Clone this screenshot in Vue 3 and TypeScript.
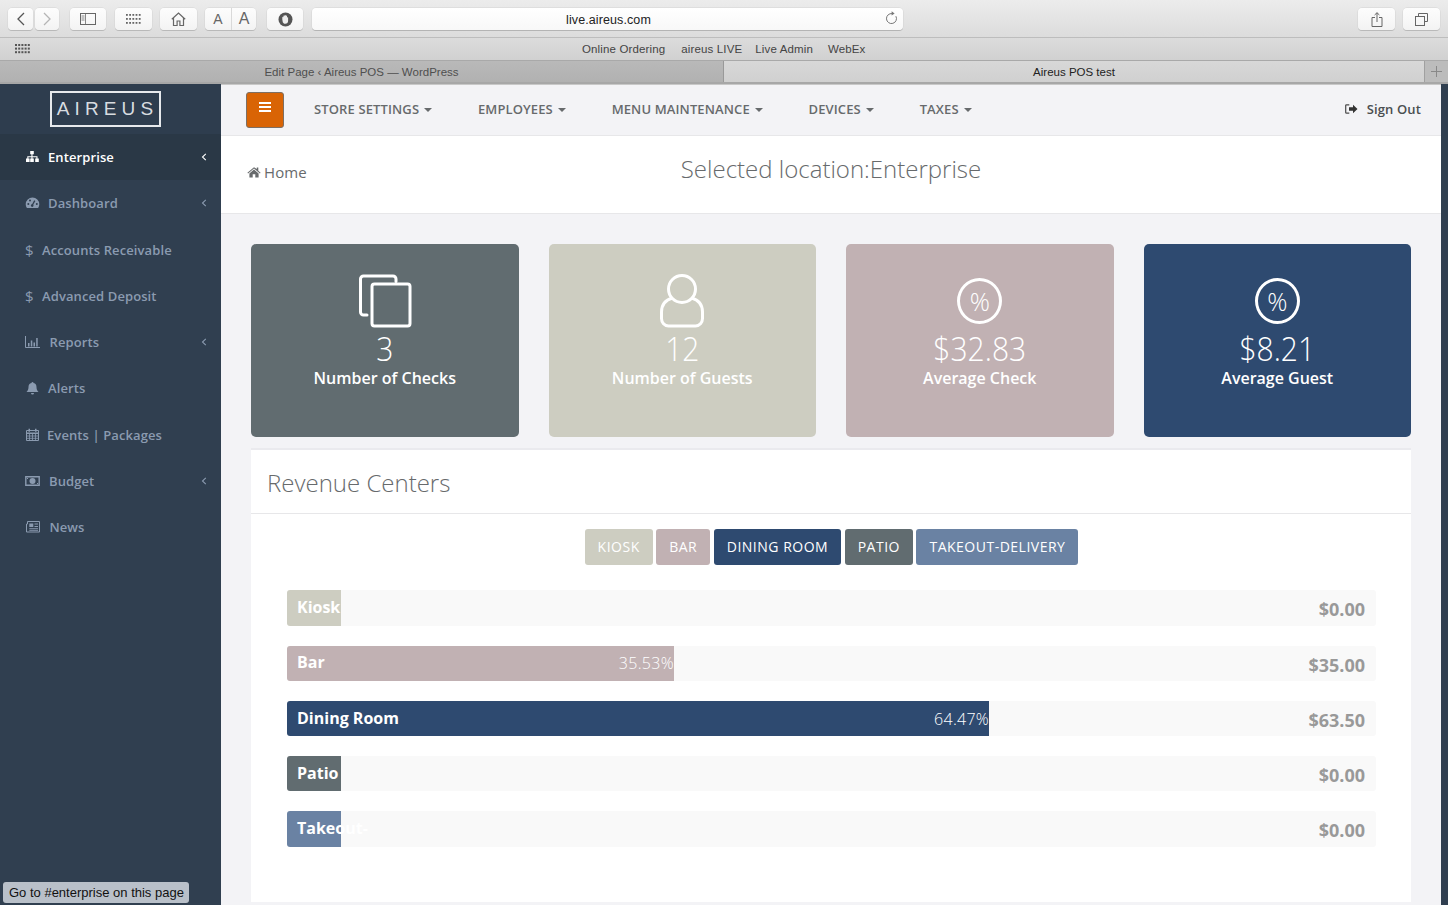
<script setup lang="ts">
interface MenuItem { label: string; icon: string; arrow?: boolean; active?: boolean; gap: number }
const menu: MenuItem[] = [
  { label: 'Enterprise', icon: 'sitemap', arrow: true, active: true, gap: 8 },
  { label: 'Dashboard', icon: 'gauge', arrow: true, gap: 8 },
  { label: 'Accounts Receivable', icon: 'dollar', gap: 9 },
  { label: 'Advanced Deposit', icon: 'dollar', gap: 9 },
  { label: 'Reports', icon: 'chart', arrow: true, gap: 9.5 },
  { label: 'Alerts', icon: 'bell', gap: 8 },
  { label: 'Events | Packages', icon: 'calendar', gap: 7 },
  { label: 'Budget', icon: 'money', arrow: true, gap: 9 },
  { label: 'News', icon: 'news', gap: 9.5 }
]
const navItems = ['STORE SETTINGS', 'EMPLOYEES', 'MENU MAINTENANCE', 'DEVICES', 'TAXES']
const cards = [
  { value: '3', label: 'Number of Checks', icon: 'copy', color: '#616c70' },
  { value: '12', label: 'Number of Guests', icon: 'user', color: '#cdcdc1' },
  { value: '$32.83', label: 'Average Check', icon: 'percent', color: '#c1b1b3' },
  { value: '$8.21', label: 'Average Guest', icon: 'percent', color: '#2e4a70' }
]
const tabs = [
  { label: 'KIOSK', color: '#cdcdc1' },
  { label: 'BAR', color: '#c1b1b3' },
  { label: 'DINING ROOM', color: '#2e4a70' },
  { label: 'PATIO', color: '#616c70' },
  { label: 'TAKEOUT-DELIVERY', color: '#6a82a3' }
]
const bars = [
  { label: 'Kiosk', pct: 5, text: '', amount: '$0.00', color: '#cdcdc1' },
  { label: 'Bar', pct: 35.53, text: '35.53%', amount: '$35.00', color: '#c1b1b3' },
  { label: 'Dining Room', pct: 64.47, text: '64.47%', amount: '$63.50', color: '#2e4a70' },
  { label: 'Patio', pct: 5, text: '', amount: '$0.00', color: '#616c70' },
  { label: 'Takeout-', pct: 5, text: '', amount: '$0.00', color: '#6a82a3' }
]
</script>

<template>
  <div class="window">
    <header class="chrome">
      <div class="toolbar">
        <button class="tb w25" aria-label="Back">
          <svg width="10" height="14" viewBox="0 0 10 14"><path d="M8 1 2 7l6 6" fill="none" stroke="#555" stroke-width="1.3" /></svg>
        </button>
        <button class="tb w24 ml2" aria-label="Forward">
          <svg width="10" height="14" viewBox="0 0 10 14"><path d="m2 1 6 6-6 6" fill="none" stroke="#b5b5b5" stroke-width="1.3" /></svg>
        </button>
        <button class="tb w36 ml11" aria-label="Sidebar">
          <svg width="16" height="12" viewBox="0 0 16 12"><rect x=".5" y=".5" width="15" height="11" fill="none" stroke="#666" /><path d="M5.5 1v10M1.5 3h3M1.5 5h3M1.5 7h3" stroke="#888" fill="none" /></svg>
        </button>
        <button class="tb w37 ml9" aria-label="Top sites">
          <svg width="15" height="11" viewBox="0 0 15 11" fill="#666"><g v-for="r in 3" :key="r"><rect v-for="c in 5" :key="c" :x="(c - 1) * 3.2" :y="(r - 1) * 4" width="1.8" height="1.8" /></g></svg>
        </button>
        <button class="tb w37 ml8" aria-label="Home">
          <svg width="15" height="14" viewBox="0 0 15 14"><path d="M.8 7.2 7.5 1l6.7 6.2M2.5 6v7.5h3.6V9h2.8v4.5h3.6V6" fill="none" stroke="#666" stroke-width="1.2" /></svg>
        </button>
        <div class="tb w51 ml8 aa">
          <span class="a-small">A</span><span class="a-big">A</span>
        </div>
        <button class="tb w36 ml11" aria-label="Shield">
          <svg width="15" height="15" viewBox="0 0 15 15"><circle cx="7.5" cy="7.5" r="7" fill="#555" /><path d="M4.300 7.500V5.200a.6.600 0 0 1 1.100 0V4a.6.600 0 0 1 1.200 0v-.4a.6.600 0 0 1 1.200 0V4a.6.600 0 0 1 1.200 0v1.500a.6.600 0 0 1 1.100 0v3.300c0 1.700-1 3-2.900 3-1.300 0-2-.6-2.400-1.500z" fill="#eee" /></svg>
        </button>
        <div class="url ml9">
          <span>live.aireus.com</span>
          <svg class="reload" width="13" height="14" viewBox="0 0 13 14"><path d="M10.9 5.2A5 5 0 1 1 7.2 2.6" fill="none" stroke="#777" /><path d="M6.6.3 9.6 2.6 6.6 4.6z" fill="#777" /></svg>
        </div>
        <span class="spacer"></span>
        <button class="tb w37" aria-label="Share">
          <svg width="12" height="15" viewBox="0 0 12 15"><path d="M4 5.500H1v9h10v-9H8M6 10V.8M3.600 3 6 .7 8.400 3" fill="none" stroke="#666" /></svg>
        </button>
        <button class="tb w37 ml8" aria-label="Tabs">
          <svg width="13" height="13" viewBox="0 0 13 13"><path d="M3.500 3.500v-3h9v8h-3" fill="none" stroke="#666" /><rect x=".5" y="3.500" width="9" height="9" fill="none" stroke="#666" /></svg>
        </button>
      </div>
      <div class="bookmarks">
        <svg class="bm-grid" width="15" height="10" viewBox="0 0 15 10" fill="#555"><g v-for="r in 3" :key="r"><rect v-for="c in 5" :key="c" :x="(c - 1) * 3.2" :y="(r - 1) * 3.6" width="2" height="2" /></g></svg>
        <a>Online Ordering</a><a>aireus LIVE</a><a>Live Admin</a><a>WebEx</a>
      </div>
      <div class="tabstrip">
        <div class="tab inactive">Edit Page ‹ Aireus POS — WordPress</div>
        <div class="tab current">Aireus POS test</div>
        <div class="newtab">
          <svg width="11" height="11" viewBox="0 0 11 11"><path d="M5.500 0v11M0 5.500h11" stroke="#888" /></svg>
        </div>
      </div>
    </header>

    <div class="app">
      <aside class="sidebar">
        <div class="logo-wrap"><div class="logo">AIREUS</div></div>
        <nav>
          <a v-for="m in menu" :key="m.label" class="side-item" :class="{ active: m.active }">
            <span v-if="m.icon === 'dollar'" class="dollar">$</span>
            <svg v-else class="side-icon" :class="'i-' + m.icon" width="15" height="14" viewBox="0 0 15 14" fill="currentColor">
              <template v-if="m.icon === 'sitemap'">
                <path d="M5.200 1h3.600v3.200H7.500v2h5v2.400h1.300v3.400h-3.600V8.600h1.200V7.300H7.500v1.300h1.300v3.400H5.200V8.600h1.200V7.300H3.400v1.300h1.200v3.400H1V8.600h1.300V6.200h4.100v-2H5.200z" />
              </template>
              <template v-else-if="m.icon === 'gauge'">
                <path d="M7.500 1.500a6.800 6.800 0 0 0-6.800 6.800c0 1.500.4 2.700 1.200 3.700h11.200c.8-1 1.200-2.200 1.200-3.700a6.800 6.800 0 0 0-6.800-6.800z" />
                <path d="M7.200 9.200 9.800 4.600" stroke="#303f50" stroke-width="1.300" />
                <circle cx="3.300" cy="8" r="1" fill="#303f50" /><circle cx="5" cy="4.500" r="1" fill="#303f50" /><circle cx="11.800" cy="8" r="1" fill="#303f50" /><circle cx="7.200" cy="9.600" r="1.300" fill="#303f50" />
              </template>
              <template v-else-if="m.icon === 'chart'">
                <path d="M.5 1v11.500H15" fill="none" stroke="currentColor" />
                <path d="M3 8h1.500v3.500H3zM5.800 5.500h1.500v6H5.800zM8.500 7.500H10v4H8.500zM11.200 3h1.500v8.500h-1.500z" />
              </template>
              <template v-else-if="m.icon === 'bell'">
                <path d="M7.500 1a1 1 0 0 1 1 1c2.300.4 3 2.200 3 4.300 0 2.700 1.200 3.700 2 4.700H1.500c.8-1 2-2 2-4.700 0-2.100.7-3.900 3-4.300a1 1 0 0 1 1-1zM6 12h3a1.500 1.500 0 0 1-3 0z" />
              </template>
              <template v-else-if="m.icon === 'calendar'">
                <path d="M1.500 2.500h12v10h-12z" fill="none" stroke="currentColor" />
                <path d="M3.500 .8h1.500v3H3.500zM10 .8h1.500v3H10zM1.500 4.500h12v1.500h-12z" />
                <path d="M2 8h11M2 10.300h11M4.500 6v6M7.500 6v6M10.500 6v6" stroke="currentColor" stroke-width=".8" />
              </template>
              <template v-else-if="m.icon === 'money'">
                <path d="M.8 2.800h13.400v8.400H.8z" fill="none" stroke="currentColor" stroke-width="1.400" />
                <circle cx="7.500" cy="7" r="3" />
                <path d="M2 4.500h1M12 9.500h1" stroke="currentColor" />
              </template>
              <template v-else>
                <path d="M2.500 1.500h12v10.500h-13V4h1z" fill="none" stroke="currentColor" />
                <path d="M4.300 3.500h4v3.500h-4zM9.500 3.500h3.500v1H9.500zM9.500 6h3.500v1H9.500zM4.300 8.300h8.700v1H4.300zM4.300 10h8.700v.8H4.300z" />
              </template>
            </svg>
            <span class="side-label" :style="{ marginLeft: m.gap + 'px' }">{{ m.label }}</span>
            <svg v-if="m.arrow" class="chev" width="6" height="8" viewBox="0 0 6 8"><path d="M4.800.8 1.500 4l3.300 3.200" fill="none" stroke="currentColor" stroke-width="1.100" /></svg>
          </a>
        </nav>
      </aside>

      <main class="main">
        <div class="topnav">
          <button class="burger" aria-label="Menu"><span></span><span></span><span></span></button>
          <ul class="navlist">
            <li v-for="n in navItems" :key="n">{{ n }}<i class="caret"></i></li>
          </ul>
          <a class="signout">
            <svg width="13" height="10" viewBox="0 0 13 10"><path d="M4.300.8H1.500a.8.800 0 0 0-.8.800v6.800c0 .4.400.8.800.8h2.800" fill="none" stroke="#4a4a4a" stroke-width="1.200" /><path d="M4 3.300h4V.8L12.500 5 8 9.200V6.700H4z" fill="#333" /></svg>
            Sign Out
          </a>
        </div>
        <div class="heading">
          <div class="crumb">
            <svg width="14" height="12" viewBox="0 0 14 12" fill="#676a6c"><path d="M7 1.200 .4 6.700l.7.800L7 2.600l5.900 4.900.7-.8-2.300-1.900V1.500H9.800v1.600zM2.400 7.400 7 3.500l4.600 3.900V11.500H8.300V8.300H5.700v3.200H2.400z" /></svg>
            Home
          </div>
          <h1>Selected location:Enterprise</h1>
        </div>

        <div class="content">
          <section class="cards">
            <article v-for="c in cards" :key="c.label" class="card" :style="{ background: c.color }">
              <svg v-if="c.icon === 'copy'" class="card-icon" width="54" height="54" viewBox="0 0 54 54" fill="none" stroke="#fff" stroke-width="3">
                <path d="M38 7.500V5a3 3 0 0 0-3-3H5.500a3 3 0 0 0-3 3v33a3 3 0 0 0 3 3H9" stroke-linecap="round" />
                <rect x="14" y="10" width="38" height="42" rx="2.500" />
              </svg>
              <svg v-else-if="c.icon === 'user'" class="card-icon" width="54" height="54" viewBox="0 0 54 54" fill="none" stroke="#fff" stroke-width="3">
                <circle cx="27" cy="15" r="13.500" />
                <path d="M17.500 24C10.500 26 6.500 31 6.500 38v6.500c0 4 3 7.500 7 7.500h27c4 0 7-3.500 7-7.500V38c0-7-4-12-11-14" />
              </svg>
              <div v-else class="pct-circle"><span>%</span></div>
              <div class="value">{{ c.value }}</div>
              <div class="label">{{ c.label }}</div>
            </article>
          </section>

          <section class="panel">
            <h2>Revenue Centers</h2>
            <div class="panel-body">
              <div class="filters">
                <button v-for="t in tabs" :key="t.label" class="filter" :style="{ background: t.color }">{{ t.label }}</button>
              </div>
              <div class="bars">
                <div v-for="b in bars" :key="b.label" class="track">
                  <div class="fill" :style="{ width: b.pct + '%', background: b.color }">
                    <span class="bar-name">{{ b.label }}</span>
                    <span class="bar-pct">{{ b.text }}</span>
                  </div>
                  <span class="amount">{{ b.amount }}</span>
                </div>
              </div>
            </div>
          </section>
        </div>
      </main>
    </div>

    <div class="status">Go to #enterprise on this page</div>
  </div>
</template>

<style>
html, body { margin: 0; padding: 0; background: #303f50; overflow: hidden; }
</style>

<style scoped>
* { box-sizing: border-box; }
.window { position: relative; width: 1448px; height: 905px; overflow: hidden; font-family: "Open Sans", sans-serif; background: #303f50; display: flex; flex-direction: column; }
.chrome { height: 84px; flex: none; font-family: "Liberation Sans", Arial, sans-serif; }
.toolbar { height: 38px; padding: 8px 8px 0; display: flex; align-items: flex-start; background: linear-gradient(#ececec, #dcdcdc); border-bottom: 1px solid #bdbdbd; }
.tb { height: 22px; padding: 0; border: 0; border-radius: 4px; background: linear-gradient(#fdfdfd, #f3f3f3); box-shadow: 0 1px 0 #b9b9b9, 0 0 0 .5px #d4d4d4; display: flex; align-items: center; justify-content: center; }
.w25 { width: 25px; } .w24 { width: 24px; } .w36 { width: 36px; } .w37 { width: 37px; } .w51 { width: 51px; }
.ml2 { margin-left: 2px; } .ml8 { margin-left: 8px; } .ml9 { margin-left: 9px; } .ml11 { margin-left: 11px; }
.aa { color: #666; }
.a-small { width: 27px; font-size: 14px; text-align: center; border-right: 1px solid #d9d9d9; line-height: 22px; }
.a-big { width: 24px; font-size: 16px; text-align: center; line-height: 22px; }
.url { position: relative; width: 591px; height: 22px; border-radius: 4px; background: linear-gradient(#fff, #f8f8f8); box-shadow: 0 1px 0 #b4b4b4, 0 0 0 .5px #d4d4d4; text-align: center; font-size: 12.500px; line-height: 24px; letter-spacing: .1px; color: #222; }
.url span { display: inline-block; margin-left: 2px; }
.reload { position: absolute; right: 5px; top: 3px; }
.spacer { flex: 1; }
.bookmarks { height: 23px; display: flex; align-items: center; padding-left: 15px; background: linear-gradient(#dcdcdc, #d1d1d1); border-bottom: 1px solid #a9a9a9; font-size: 11.500px; letter-spacing: .14px; color: #444; }
.bookmarks a { margin-right: 16px; white-space: nowrap; }
.bookmarks a:nth-of-type(2) { margin-right: 13px; }
.bookmarks a:nth-of-type(3) { margin-right: 15px; }
.bm-grid { margin-right: 552px; }
.tabstrip { height: 23px; display: flex; font-size: 11.500px; border-bottom: 2px solid #a7a7a7; }
.tab { display: flex; align-items: center; justify-content: center; height: 100%; padding-top: 1px; }
.inactive { width: 723px; background: linear-gradient(#b9b9b9, #b1b1b1); color: #4f4f4f; }
.current { width: 701px; background: linear-gradient(#d8d8d8, #d0d0d0); color: #222; border-left: 1px solid #999; }
.newtab { width: 24px; background: #bcbcbc; border-left: 1px solid #a0a0a0; display: flex; align-items: center; justify-content: center; }

.app { flex: 1; display: flex; min-height: 0; }
.sidebar { width: 221px; flex: none; background: #303f50; }
.logo-wrap { height: 50px; padding: 7px 0 0 50px; background: #2e3d4e; }
.logo { width: 111px; height: 36px; border: 2px solid #e6e9ec; color: #d8dce0; font-size: 19px; letter-spacing: 5.100px; text-align: center; line-height: 32px; padding-left: 4px; font-family: "Liberation Sans", sans-serif; }
nav { display: flex; flex-direction: column; }
.side-item { position: relative; height: 46.250px; display: flex; align-items: center; padding-left: 25px; color: #8b9bb0; font-size: 13px; font-weight: 550; letter-spacing: .1px; }
.side-item.active { background: #2a3846; color: #fff; }
.side-label { white-space: nowrap; }
.side-icon { flex: none; }
.dollar { font-size: 15px; font-weight: 500; width: 8px; }
.chev { position: absolute; left: 201px; top: 19px; }

.main { width: 1220px; flex: none; background: #f3f3f6; display: flex; flex-direction: column; }
.topnav { height: 52px; display: flex; align-items: center; padding: 0 20px 2px 25px; background: #f3f3f6; border-bottom: 1px solid #e7e7e9; border-top: 1px solid #c8c8c8; }
.burger { width: 38px; height: 36px; margin-top: 2px; border: 1px solid #7d6f63; border-radius: 3px; background: #d96405; display: flex; flex-direction: column; align-items: center; gap: 2px; padding: 9px 0 0; }
.burger span { width: 12px; height: 2px; background: #fff; }
.navlist { list-style: none; display: flex; margin: 0 0 0 30px; padding: 0; gap: 45.750px; flex: 1; }
.navlist li { font-size: 13px; font-weight: 550; letter-spacing: .12px; color: #676a6c; white-space: nowrap; display: flex; align-items: center; }
.caret { width: 0; height: 0; margin-left: 5px; margin-top: 2px; border: 4px solid transparent; border-top-color: #676a6c; border-bottom: 0; }
.signout { font-size: 13px; font-weight: 550; letter-spacing: .12px; color: #4a4e50; display: flex; align-items: center; gap: 9px; }
.heading { position: relative; height: 78px; background: #fff; border-bottom: 1px solid #e7e7e9; padding: 0 26px; display: flex; align-items: center; }
.crumb { font-size: 15px; letter-spacing: .1px; color: #676a6c; display: flex; align-items: center; gap: 3px; margin-top: -5px; }
h1 { position: absolute; left: 0; right: 0; top: 15px; margin: 0; text-align: center; font-size: 24px; font-weight: 300; color: #676a6c; line-height: 36px; }
.content { flex: 1; padding: 30px 30px 0; display: flex; flex-direction: column; }
.cards { display: grid; grid-template-columns: repeat(4, 1fr); gap: 30px; }
.card { height: 193px; border-radius: 5px; color: #fff; display: flex; flex-direction: column; align-items: center; padding-top: 30px; }
.card-icon { display: block; height: 54px; }
.pct-circle { width: 45px; height: 46px; margin: 4px 0 4px; border: 3px solid #fff; border-radius: 50%; font-size: 25px; font-weight: 350; display: flex; align-items: center; justify-content: center; line-height: 1; }
.value { font-size: 30px; font-weight: 300; line-height: 30px; margin-top: 6px; margin-bottom: 4px; transform: scaleY(1.12); }
.label { font-size: 16px; font-weight: 600; line-height: 20px; margin-top: 0; }
.panel { margin-top: 11px; height: 454px; background: #fff; border-top: 2px solid #eaeaee; display: flex; flex-direction: column; }
h2 { margin: 0; height: 64px; padding: 0 16px; font-size: 24px; font-weight: 300; color: #676a6c; line-height: 66px; border-bottom: 1px solid #e7e7e9; flex: none; }
.panel-body { padding: 15px 35px 0 36px; }
.filters { display: flex; justify-content: center; gap: 3.500px; }
.filter { height: 36px; border: 0; border-radius: 3px; padding: 0 13px 2px; color: #fff; font-family: "Open Sans", sans-serif; font-size: 14px; letter-spacing: .5px; white-space: nowrap; }
.bars { margin-top: 25.400px; display: flex; flex-direction: column; gap: 19.850px; }
.track { position: relative; height: 35.400px; background: #f9f9f9; border-radius: 3px; }
.fill { height: 100%; border-radius: 3px 0 0 3px; color: #fff; display: flex; align-items: center; justify-content: space-between; padding-left: 10px; white-space: nowrap; }
.bar-name { font-size: 16px; font-weight: 700; position: relative; top: -1px; }
.bar-pct { font-size: 16px; font-weight: 300; letter-spacing: .3px; }
.amount { position: absolute; right: 11px; top: 6px; font-size: 18px; font-weight: 700; color: #999; line-height: 26px; }
.status { position: absolute; left: 3px; bottom: 2px; width: 186px; height: 21px; background: #b9c0c9; border-radius: 3px; color: #111; font: 13px/21px "Liberation Sans", Arial, sans-serif; padding-left: 6px; white-space: nowrap; }
</style>
